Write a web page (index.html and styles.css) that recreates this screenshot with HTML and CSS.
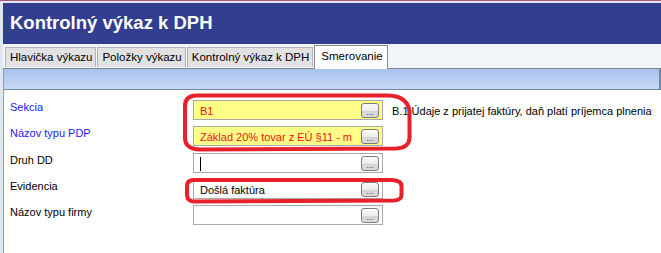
FILE: index.html
```html
<!DOCTYPE html>
<html lang="sk">
<head>
    <meta charset="UTF-8">
    <title>Kontrolný výkaz k DPH</title>
    <link rel="stylesheet" href="styles.css">
</head>
<body>
    <div class="window">
        <div class="topline"></div>
        <div class="header">
            <h1>Kontrolný výkaz k DPH</h1>
        </div>
        <div class="tabs">
            <div class="tab">Hlavička výkazu</div>
            <div class="tab">Položky výkazu</div>
            <div class="tab">Kontrolný výkaz k DPH</div>
            <div class="tab active">Smerovanie</div>
        </div>
        <div class="panel">
            <div class="toolbar"></div>
            <div class="form">
                <div class="row">
                    <div class="label required">Sekcia</div>
                    <div class="field yellow"><span class="value">B1</span><button class="dots">...</button></div>
                    <div class="note">B.1 Údaje z prijatej faktúry, daň platí príjemca plnenia</div>
                </div>
                <div class="row">
                    <div class="label required">Názov typu PDP</div>
                    <div class="field yellow"><span class="value">Základ 20% tovar z EÚ §11 - m</span><button class="dots">...</button></div>
                </div>
                <div class="row">
                    <div class="label">Druh DD</div>
                    <div class="field"><span class="value"><span class="caret"></span></span><button class="dots">...</button></div>
                </div>
                <div class="row">
                    <div class="label">Evidencia</div>
                    <div class="field"><span class="value">Došlá faktúra</span><button class="dots">...</button></div>
                </div>
                <div class="row">
                    <div class="label">Názov typu firmy</div>
                    <div class="field"><span class="value"></span><button class="dots">...</button></div>
                </div>
            </div>
        </div>
        <svg class="marks" width="661" height="253" viewBox="0 0 661 253">
            <path d="M196 95.5 L388 95.5 Q408 96 409.5 112 L409.5 138 Q409 148 396 148.5 L200 149.5 Q185 149 185 138 L185 106 Q185 96 196 95.5 Z"/>
            <path d="M193 180 L392 180 Q401.5 180.5 401.5 186 L401.5 195 Q401.5 200 394 200.5 L195 201.5 Q187 201.5 187 195 L187 186 Q187 180.5 193 180 Z"/>
        </svg>
    </div>
</body>
</html>
```

FILE: styles.css
```css
body {
    margin: 0;
    padding: 0;
    background-color: #ffffff;
    font-family: 'Liberation Sans', Arial, sans-serif;
    font-size: 11px;
    overflow: hidden;
}
.window {
    position: relative;
    width: 661px;
    height: 253px;
    background-color: #dfe6ef;
    padding-left: 3px;
    box-sizing: border-box;
}
.topline {
    height: 1px;
    margin-left: -3px;
    background-color: #a4587e;
    border-bottom: 2px solid #e4e8ee;
}
.header {
    background-color: #323e8f;
    height: 41px;
    display: flex;
    align-items: center;
    padding-left: 7px;
}
.header h1 {
    margin: 0;
    color: #ffffff;
    font-size: 18.5px;
    font-weight: bold;
    padding-bottom: 1px;
}
.tabs {
    display: flex;
    align-items: flex-end;
    height: 24px;
    background-color: #f1f4f9;
    padding-left: 2px;
    border-bottom: 1px solid #7d8594;
}
.tab {
    height: 19px;
    line-height: 19px;
    padding: 0 3px 0 4px;
    margin-right: 1px;
    margin-bottom: 1px;
    background-color: #e2e2e2;
    border: 1px solid #b4b4b4;
    border-bottom: none;
    color: #000000;
    font-size: 11.5px;
    white-space: nowrap;
}
.tab.active {
    height: 23px;
    line-height: 20px;
    margin-bottom: -1px;
    background-color: #ffffff;
    border-color: #8a8a8a;
    padding: 0 4px 0 6px;
}
.panel {
    background-color: #ffffff;
    border-left: 1px solid #8aa0c0;
    height: 185px;
}
.toolbar {
    height: 20px;
    background: linear-gradient(#a7c2ed, #c8d8f3);
    border-right: 2px solid #7088a8;
    border-bottom: 1px solid #6f87a9;
}
.form {
    padding-top: 10px;
    padding-left: 6px;
}
.row {
    display: flex;
    align-items: flex-start;
    height: 26px;
}
.row:nth-child(2) {
    height: 27px;
}
.label {
    flex-shrink: 0;
    width: 183px;
    padding-top: 1px;
    color: #000000;
}
.label.required {
    color: #1a1aff;
}
.field {
    flex-shrink: 0;
    display: flex;
    align-items: center;
    width: 181px;
    height: 18px;
    border: 1px solid #a9a9a9;
    background-color: #ffffff;
    padding-left: 6px;
    padding-right: 1px;
}
.field.yellow {
    background-color: #ffff88;
    color: #ee1111;
}
.value {
    flex: 1;
    white-space: nowrap;
    overflow: hidden;
    padding-top: 1px;
}
.caret {
    display: inline-block;
    width: 1px;
    height: 14px;
    background-color: #000000;
    vertical-align: middle;
}
.dots {
    flex-shrink: 0;
    width: 18px;
    height: 15px;
    margin: 0 2px 0 2px;
    padding: 0;
    border: 1px solid #7b7b7b;
    border-radius: 3px;
    background: linear-gradient(#fbfbfb 0%, #ececec 50%, #d4d4d4 51%, #dcdcdc 100%);
    font-family: 'Liberation Sans', Arial, sans-serif;
    font-size: 9px;
    line-height: 17px;
    color: #50406a;
}
.note {
    padding: 5px 0 0 9px;
    white-space: nowrap;
    color: #000000;
}
.marks {
    position: absolute;
    top: 0;
    left: 0;
    pointer-events: none;
}
.marks path {
    fill: none;
    stroke: #e8202a;
    stroke-width: 4;
}
```
